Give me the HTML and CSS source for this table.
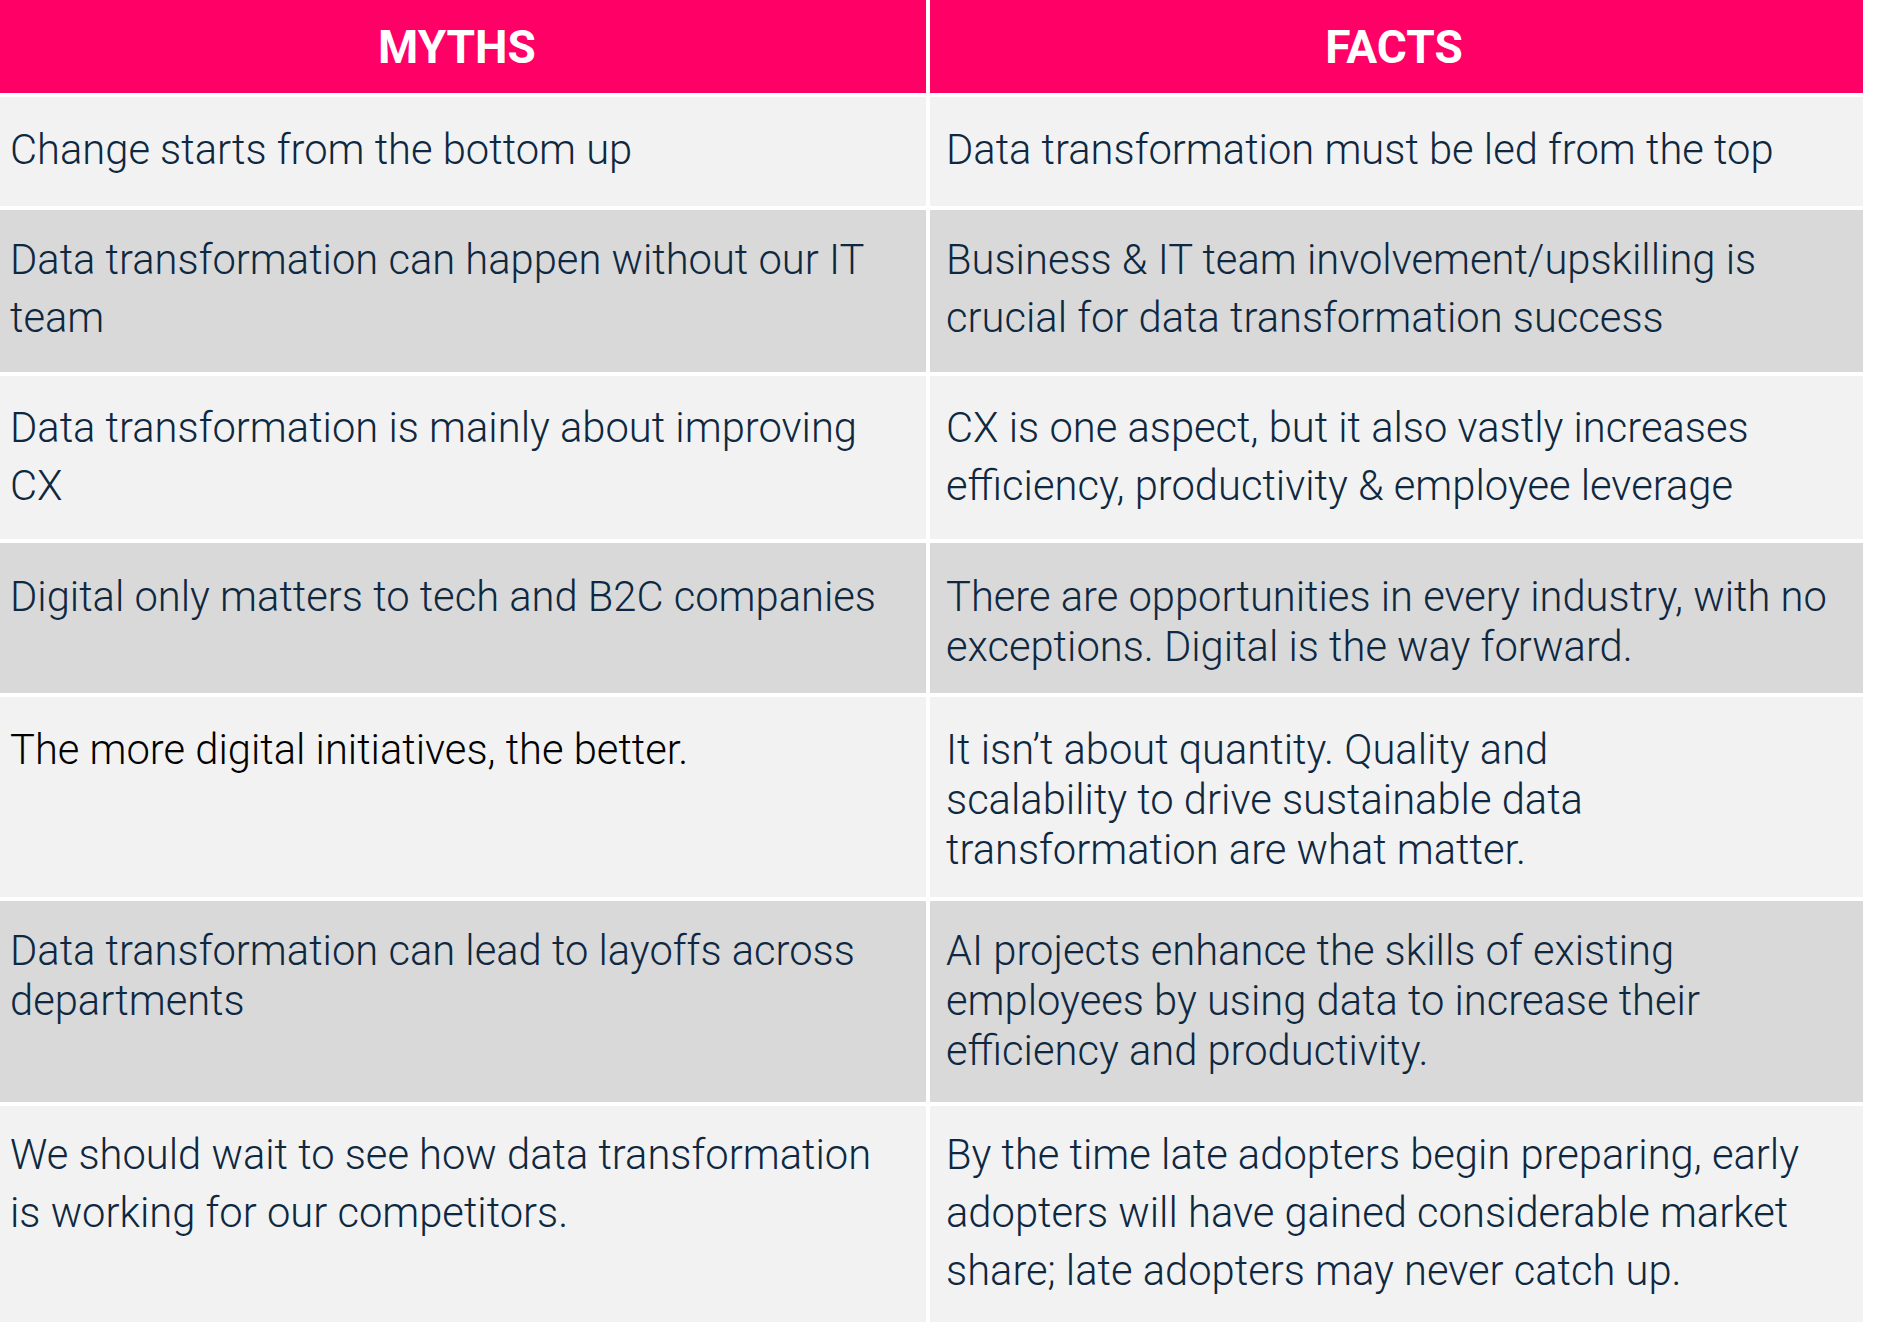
FILE: index.html
```html
<!DOCTYPE html>
<html lang="en">
<head>
<meta charset="utf-8">
<title>Myths and Facts</title>
<link rel="stylesheet" href="styles.css">
</head>
<body>
<div class="table">
  <div class="head head-left">MYTHS</div>
  <div class="head head-right">FACTS</div>

  <div class="cell light left r1">Change starts from the bottom up</div>
  <div class="cell light right r1">Data transformation must be led from the top</div>

  <div class="cell dark left r2">Data transformation can happen without our IT<br>team</div>
  <div class="cell dark right r2">Business &amp; IT team involvement/upskilling is<br>crucial for data transformation success</div>

  <div class="cell light left r3">Data transformation is mainly about improving<br>CX</div>
  <div class="cell light right r3">CX is one aspect, but it also vastly increases<br>efficiency, productivity &amp; employee leverage</div>

  <div class="cell dark left r4 tight">Digital only matters to tech and B2C companies</div>
  <div class="cell dark right r4 tight">There are opportunities in every industry, with no<br>exceptions. Digital is the way forward.</div>

  <div class="cell light left r5 tight black">The more digital initiatives, the better.</div>
  <div class="cell light right r5 tight">It isn’t about quantity. Quality and<br>scalability to drive sustainable data<br>transformation are what matter.</div>

  <div class="cell dark left r6 tight">Data transformation can lead to layoffs across<br>departments</div>
  <div class="cell dark right r6 tight">AI projects enhance the skills of existing<br>employees by using data to increase their<br>efficiency and productivity.</div>

  <div class="cell light left r7">We should wait to see how data transformation<br>is working for our competitors.</div>
  <div class="cell light right r7">By the time late adopters begin preparing, early<br>adopters will have gained considerable market<br>share; late adopters may never catch up.</div>
</div>
</body>
</html>
```

FILE: styles.css
```css
html, body {
  margin: 0;
  padding: 0;
  background: #ffffff;
}

body {
  font-family: Roboto, "Liberation Sans", Arial, sans-serif;
  color: #0e2841;
}

.table {
  display: grid;
  width: 1863px;
  grid-template-columns: 926px 933px;
  grid-template-rows: 93px 109px 162px 163px 150px 200px 201px 216px;
  column-gap: 4px;
  row-gap: 4px;
}

.head {
  background: #ff0066;
  color: #ffffff;
  font-weight: 700;
  font-size: 46px;
  display: flex;
  align-items: center;
  justify-content: center;
  letter-spacing: 0;
}

.head-left {
  padding-right: 12px;
}

.head-right {
  padding-right: 5px;
}

.cell {
  font-weight: 300;
  font-size: 41.7px;
  line-height: 58px;
  box-sizing: border-box;
  padding-top: 22px;
}

.cell.tight {
  line-height: 50px;
}

.left {
  padding-left: 10px;
  padding-right: 6px;
}

.right {
  padding-left: 16px;
  padding-right: 6px;
}

.light {
  background: #f2f2f2;
}

.dark {
  background: #d9d9d9;
}

.black {
  color: #000000;
}

.r1 { padding-top: 24px; }
.r2 { padding-top: 21px; }
.r3 { padding-top: 23px; }
.r4 { padding-top: 29px; }
.r5 { padding-top: 28px; }
.r6 { padding-top: 25px; }
.r7 { padding-top: 20px; }
```
